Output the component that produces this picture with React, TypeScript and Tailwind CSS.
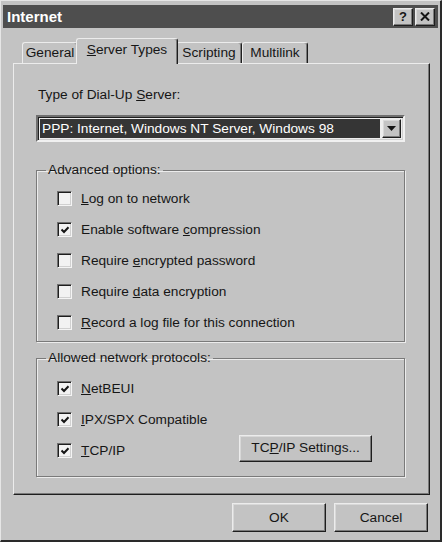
import type { ReactNode } from 'react';

const raised =
  'bg-[#c3c3c3] border-t border-l border-r border-b border-t-[#ececec] border-l-[#ececec] border-r-[#1e1e1e] border-b-[#1e1e1e] shadow-[inset_-1px_-1px_0_#7a7a7a,inset_1px_1px_0_#d8d8d8]';

function CheckBox({ checked }: { checked?: boolean }) {
  return (
    <span className="w-[15px] h-[15px] shrink-0 bg-[#f2f2f2] border-t border-l border-r border-b border-t-[#6f6f6f] border-l-[#6f6f6f] border-r-[#f4f4f4] border-b-[#f4f4f4] shadow-[inset_1px_1px_0_#1e1e1e,inset_-1px_-1px_0_#d0d0d0] flex items-center justify-center">
      {checked && (
        <svg width="10" height="10" viewBox="0 0 10 10">
          <path d="M1.5 4.5 L4 7 L8.5 2.2" fill="none" stroke="#151515" strokeWidth="2" />
        </svg>
      )}
    </span>
  );
}

function Row({ checked, children }: { checked?: boolean; children: ReactNode }) {
  return (
    <div className="h-[31px] flex items-center pl-[20px] gap-[9px]">
      <CheckBox checked={checked} />
      <span className="whitespace-nowrap">{children}</span>
    </div>
  );
}

function Group({ label, children, className }: { label: string; children: ReactNode; className: string }) {
  return (
    <fieldset
      className={`w-[369px] border border-[#7a7a7a] shadow-[inset_1px_1px_0_#ececec,1px_1px_0_#ececec] ${className}`}
    >
      <legend className="ml-[9px] px-[2px] leading-[16px]">{label}</legend>
      {children}
    </fieldset>
  );
}

function Tab({ label, selected }: { label: ReactNode; selected?: boolean }) {
  if (selected) {
    return (
      <div className="relative z-10 -mx-[2px] -mb-[1px] w-[102px] h-[26px] bg-[#c3c3c3] rounded-t-[3px] border-t border-l border-r border-t-[#ececec] border-l-[#ececec] border-r-[#1e1e1e] shadow-[inset_-1px_0_0_#7a7a7a] flex justify-center pt-[3px]">
        {label}
      </div>
    );
  }
  return (
    <div className="h-[21px] rounded-t-[3px] border-t border-l border-r border-t-[#ececec] border-l-[#ececec] border-r-[#1e1e1e] shadow-[inset_-1px_0_0_#7a7a7a] flex justify-center items-start pt-[2px] px-[5px]">
      {label}
    </div>
  );
}

export default function App() {
  return (
    <div className="w-[442px] h-[542px] bg-[#c3c3c3] border-t border-l border-r-2 border-b-2 border-t-[#e6e6e6] border-l-[#e6e6e6] border-r-[#2a2a2a] border-b-[#2a2a2a] pt-[4px] pl-[2px] pr-[2px] flex flex-col font-['Liberation_Sans',Arial,sans-serif] text-[13.7px] leading-[16px] text-[#161616] overflow-hidden">
      {/* Title bar */}
      <div className="h-[23px] bg-[#4e4e4e] flex items-center pl-[4px] pr-[3px]">
        <span className="text-white font-bold text-[15px]">Internet</span>
        <div className="ml-auto flex gap-[2px]">
          <div className={`w-[20px] h-[18px] flex items-center justify-center font-bold text-[13px] leading-none ${raised}`}>?</div>
          <div className={`w-[20px] h-[18px] flex items-center justify-center ${raised}`}>
            <svg width="10" height="9" viewBox="0 0 10 9">
              <path d="M1 0.5 L9 8.5 M9 0.5 L1 8.5" stroke="#151515" strokeWidth="2" />
            </svg>
          </div>
        </div>
      </div>

      {/* Tabs */}
      <div className="mt-[10px] ml-[10px] pl-[9px] h-[25px] flex items-end">
        <div className="w-[56px]"><Tab label="General" /></div>
        <Tab
          selected
          label={
            <span>
              <u>S</u>erver Types
            </span>
          }
        />
        <div className="w-[66px]"><Tab label="Scripting" /></div>
        <div className="w-[66px]"><Tab label="Multilink" /></div>
      </div>

      {/* Panel */}
      <div className="ml-[10px] w-[417px] h-[432px] border-t border-l border-r border-b border-t-[#ececec] border-l-[#ececec] border-r-[#1e1e1e] border-b-[#1e1e1e] shadow-[inset_-1px_-1px_0_#7a7a7a] pl-[22px] flex flex-col">
        <div className="mt-[23px] pl-[2px]">
          Type of Dial-Up <u>S</u>erver:
        </div>

        <div className="mt-[12px] w-[369px] h-[27px] border-2 border-t-[#6f6f6f] border-l-[#6f6f6f] border-r-[#f0f0f0] border-b-[#f0f0f0] shadow-[inset_1px_1px_0_#1e1e1e,inset_-1px_-1px_0_#d0d0d0] bg-[#ededed] flex items-stretch p-[2px]">
          <div className="flex-1 bg-[#353535] text-white pl-[2px] flex items-center whitespace-nowrap">
            PPP: Internet, Windows NT Server, Windows 98
          </div>
          <div className={`ml-[2px] w-[19px] flex items-center justify-center ${raised}`}>
            <svg width="9" height="5" viewBox="0 0 9 5">
              <path d="M0 0 H9 L4.5 5 Z" fill="#151515" />
            </svg>
          </div>
        </div>

        <Group label="Advanced options:" className="mt-[20px] pt-[5px] pb-[3px]">
          <Row>
            <u>L</u>og on to network
          </Row>
          <Row checked>
            Enable software <u>c</u>ompression
          </Row>
          <Row>
            Require <u>e</u>ncrypted password
          </Row>
          <Row>
            Require <u>d</u>ata encryption
          </Row>
          <Row>
            <u>R</u>ecord a log file for this connection
          </Row>
        </Group>

        <Group label="Allowed network protocols:" className="mt-[8px] pt-[7px] pb-[10px]">
          <Row checked>
            <u>N</u>etBEUI
          </Row>
          <Row checked>
            <u>I</u>PX/SPX Compatible
          </Row>
          <div className="h-[31px] flex items-center pl-[20px] gap-[9px]">
            <CheckBox checked />
            <span>
              <u>T</u>CP/IP
            </span>
            <div className={`ml-[105px] -mt-[5px] w-[133px] h-[27px] flex items-center justify-center ${raised}`}>
              TC<u>P</u>/IP Settings...
            </div>
          </div>
        </Group>
      </div>

      {/* Buttons */}
      <div className="mt-[8px] mr-[10px] flex justify-end gap-[8px]">
        <div className={`w-[94px] h-[29px] flex items-center justify-center ${raised}`}>OK</div>
        <div className={`w-[94px] h-[29px] flex items-center justify-center ${raised}`}>Cancel</div>
      </div>
    </div>
  );
}
